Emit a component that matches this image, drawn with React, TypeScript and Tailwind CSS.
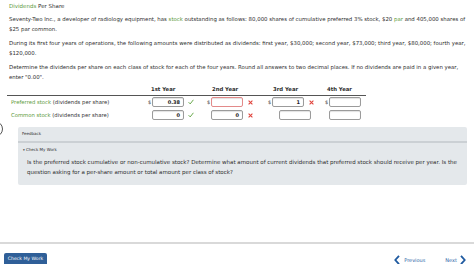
import React from "react";

const G = "text-[#5b9a3c]";

function Check() {
  return (
    <svg width="6" height="6" viewBox="0 0 6 6" className="ml-[4px] mt-[2px]">
      <polyline points="0.6,3.2 2.2,4.9 5.4,0.8" fill="none" stroke="#5aa03a" strokeWidth="0.9" />
    </svg>
  );
}

function Cross() {
  return (
    <svg width="5" height="5" viewBox="0 0 5 5" className="ml-[5px] mt-[2.5px]">
      <path d="M0.6 0.6 L4.4 4.4 M4.4 0.6 L0.6 4.4" stroke="#e0443c" strokeWidth="1.1" />
    </svg>
  );
}

function Box({ value, red, dollar }: { value?: string; red?: boolean; dollar?: boolean }) {
  return (
    <div
      className={
        "relative w-[32px] h-[10px] rounded-[2px] border bg-white text-right pr-[3px] font-bold text-[5px] leading-[8px] text-[#222] shadow-[inset_0_1px_1px_rgba(0,0,0,0.12)] " +
        (red ? "border-[#e38a8a]" : "border-[#9b9b9b]")
      }
    >
      {dollar && <span className="absolute left-[-5px] top-0 font-normal text-[#333]">$</span>}
      {value}
    </div>
  );
}

export default function App() {
  return (
    <div className="relative w-[474px] h-[264px] overflow-hidden bg-white text-[#2e2e2e] font-['DejaVu_Sans',Verdana,sans-serif] text-[5.4px] leading-[10px] flex flex-col">
      <div className="absolute left-[-13px] top-[121px] w-[16px] h-[16px] rounded-full border border-[#555]" />

      <div className="pl-[9px] pt-[1px] whitespace-nowrap">
        <div className="text-[5.5px]">
          <span className={G}>Dividends</span> Per Share
        </div>
        <p className="mt-[3px]">
          Seventy-Two Inc., a developer of radiology equipment, has <span className={G}>stock</span> outstanding as follows: 80,000 shares of cumulative preferred 3% stock, $20 <span className={G}>par</span> and 405,000 shares of
          <br />
          $25 par common.
        </p>
        <p className="mt-[4px]">
          During its first four years of operations, the following amounts were distributed as dividends: first year, $30,000; second year, $73,000; third year, $80,000; fourth year,
          <br />
          $120,000.
        </p>
        <p className="mt-[4px]">
          Determine the dividends per share on each class of stock for each of the four years. Round all answers to two decimal places. If no dividends are paid in a given year,
          <br />
          enter "0.00".
        </p>
      </div>

      <div className="ml-[7px] mt-[2px] w-[359px] whitespace-nowrap text-[5.3px]">
        <div className="grid grid-cols-[136px_60px_60px_55px_48px] h-[12px] border-b border-[#555] font-bold">
          <div />
          <div className="pl-[8px]">1st Year</div>
          <div className="pl-[9px]">2nd Year</div>
          <div className="pl-[10px]">3rd Year</div>
          <div className="pl-[9px]">4th Year</div>
        </div>
        <div className="grid grid-cols-[136px_60px_60px_55px_48px] h-[13px]">
          <div className="pl-[4px] leading-[12px]">
            <span className={G}>Preferred stock</span> (dividends per share)
          </div>
          <div className="flex items-start pt-[1px] pl-[9px]">
            <Box value="0.38" dollar />
            <Check />
          </div>
          <div className="flex items-start pt-[1px] pl-[8px]">
            <Box red dollar />
            <Cross />
          </div>
          <div className="flex items-start pt-[1px] pl-[9px]">
            <Box value="1" dollar />
            <Cross />
          </div>
          <div className="flex items-start pt-[1px] pl-[11px]">
            <Box dollar />
          </div>
        </div>
        <div className="grid grid-cols-[136px_60px_60px_55px_48px] h-[13px]">
          <div className="pl-[4px] leading-[12px]">
            <span className={G}>Common stock</span> (dividends per share)
          </div>
          <div className="flex items-start pt-[1px] pl-[9px]">
            <Box value="0" />
            <Check />
          </div>
          <div className="flex items-start pt-[1px] pl-[8px]">
            <Box value="0" />
            <Cross />
          </div>
          <div className="flex items-start pt-[1px] pl-[16px]">
            <Box />
          </div>
          <div className="flex items-start pt-[1px] pl-[11px]">
            <Box />
          </div>
        </div>
      </div>

      <div className="ml-[18px] mt-[5px] w-[449px] bg-[#e4e8eb] rounded-[2px] pb-[8px] whitespace-nowrap">
        <div className="h-[14px] pl-[4px] text-[4px] leading-[14px] text-[#333]">Feedback</div>
        <div className="h-[2px] bg-[#cbd0d4]" />
        <div className="mt-[2px] pl-[5px] text-[4px] leading-[10px] text-[#333]">
          <span className="text-[3.5px]">▾</span> Check My Work
        </div>
        <p className="mt-[2px] pl-[9px] text-[5.5px]">
          Is the preferred stock cumulative or non-cumulative stock? Determine what amount of current dividends that preferred stock should receive per year. Is the
          <br />
          question asking for a per-share amount or total amount per class of stock?
        </p>
      </div>

      <div className="mt-auto h-[22px] border-t-2 border-[#d9d9d9] pt-[9px] pl-[4px] pr-[8px] flex justify-between items-start">
        <div className="w-[43px] h-[13px] rounded-[2px] bg-[#2f5f98] text-white text-[4.6px] leading-[12px] text-center">
          Check My Work
        </div>
        <div className="flex items-center mt-[2px] text-[#2a63a6] text-[5px] leading-[10px]">
          <svg width="6" height="10" viewBox="0 0 6 10">
            <polyline points="5,0.8 1.3,5 5,9.2" fill="none" stroke="#1f5aa0" strokeWidth="1.8" />
          </svg>
          <span className="ml-[4px]">Previous</span>
          <span className="ml-[20px]">Next</span>
          <svg width="6" height="10" viewBox="0 0 6 10" className="ml-[3px]">
            <polyline points="1,0.8 4.7,5 1,9.2" fill="none" stroke="#1f5aa0" strokeWidth="1.8" />
          </svg>
        </div>
      </div>
    </div>
  );
}
